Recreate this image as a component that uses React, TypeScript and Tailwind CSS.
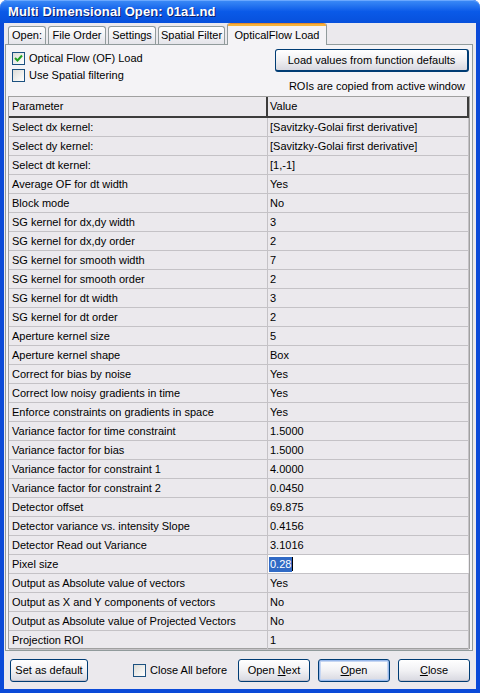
import React from "react";

const rows: [string, string][] = [
  ["Select dx kernel:", "[Savitzky-Golai first derivative]"],
  ["Select dy kernel:", "[Savitzky-Golai first derivative]"],
  ["Select dt kernel:", "[1,-1]"],
  ["Average OF for dt width", "Yes"],
  ["Block mode", "No"],
  ["SG kernel for dx,dy width", "3"],
  ["SG kernel for dx,dy order", "2"],
  ["SG kernel for smooth width", "7"],
  ["SG kernel for smooth order", "2"],
  ["SG kernel for dt width", "3"],
  ["SG kernel for dt order", "2"],
  ["Aperture kernel size", "5"],
  ["Aperture kernel shape", "Box"],
  ["Correct for bias by noise", "Yes"],
  ["Correct low noisy gradients in time", "Yes"],
  ["Enforce constraints on gradients in space", "Yes"],
  ["Variance factor for time constraint", "1.5000"],
  ["Variance factor for bias", "1.5000"],
  ["Variance factor for constraint 1", "4.0000"],
  ["Variance factor for constraint 2", "0.0450"],
  ["Detector offset", "69.875"],
  ["Detector variance vs. intensity Slope", "0.4156"],
  ["Detector Read out Variance", "3.1016"],
  ["Pixel size", "__EDIT__"],
  ["Output as Absolute value of vectors", "Yes"],
  ["Output as X and Y components of vectors", "No"],
  ["Output as Absolute value of Projected Vectors", "No"],
  ["Projection ROI", "1"],
];

function CheckBox({ checked }: { checked?: boolean }) {
  return (
    <div className="w-[13px] h-[13px] border border-[#1c5180] bg-gradient-to-br from-[#dcdcd7] to-[#ffffff] flex items-center justify-center shrink-0">
      {checked && (
        <svg width="9" height="9" viewBox="0 0 9 9">
          <path d="M1 4 L3.5 6.5 L8 1.5" stroke="#21a121" strokeWidth="2" fill="none" />
        </svg>
      )}
    </div>
  );
}

function Btn({ children, w, def }: { children: React.ReactNode; w: string; def?: boolean }) {
  return (
    <div
      className={`${w} h-[23px] rounded-[3px] border border-[#003c74] bg-gradient-to-b from-[#ffffff] via-[#f1f1f4] to-[#d8d8e0] flex items-center justify-center text-[11px] text-black ${
        def ? "shadow-[inset_0_0_0_1px_#98b8ea,inset_0_0_0_2px_#c6d6f2]" : "shadow-[inset_0_-1px_0_#c0c0cc]"
      }`}
    >
      {children}
    </div>
  );
}

function Tab({ label, w }: { label: string; w: string }) {
  return (
    <div
      className={`${w} h-[18px] mt-[3px] border border-b-0 border-[#919b9c] rounded-t-[3px] bg-gradient-to-b from-[#ffffff] to-[#e4e4ea] flex items-center justify-center text-[11px] text-black`}
    >
      {label}
    </div>
  );
}

export default function App() {
  return (
    <div className="w-[480px] h-[693px] bg-[#0b4ad8] rounded-t-[7px] flex flex-col font-['Liberation_Sans','DejaVu_Sans',sans-serif] select-none overflow-hidden">
      {/* Title bar */}
      <div className="h-[23px] shrink-0 rounded-t-[7px] bg-gradient-to-b from-[#3d8cf7] via-[#0a5ae8] to-[#0750dc] flex items-center pl-[8px] shadow-[inset_0_1px_0_#6aa8ff]">
        <span className="text-white font-bold text-[13px] tracking-[0.1px] [text-shadow:1px_1px_0_#0a1e6e]">
          Multi Dimensional Open: 01a1.nd
        </span>
      </div>
      {/* Body */}
      <div className="flex-1 mx-[4px] mb-[4px] bg-[#ebe9ed] flex flex-col">
        {/* Tabs */}
        <div className="h-[21px] shrink-0 flex items-end pl-[4px] gap-[2px] relative z-10">
          <Tab label="Open:" w="w-[38px]" />
          <Tab label="File Order" w="w-[58px]" />
          <Tab label="Settings" w="w-[48px]" />
          <Tab label="Spatial Filter" w="w-[67px]" />
          <div className="w-[100px] h-[22px] -mb-[1px] border border-b-0 border-[#919b9c] border-t-0 rounded-t-[3px] bg-[#f4f3f6] flex flex-col">
            <div className="h-[3px] rounded-t-[3px] bg-[#f5b33c] border-t border-[#e68b2c]" />
            <div className="flex-1 flex items-center justify-center text-[11px] text-black">OpticalFlow Load</div>
          </div>
        </div>
        {/* Panel */}
        <div className="h-[607px] shrink-0 ml-[1px] mr-[3px] border border-[#919b9c] bg-[#f4f3f6] flex flex-col px-[2px]">
          <div className="h-[51px] shrink-0 flex">
            <div className="flex flex-col pl-[4px] pt-[7px] gap-[4px]">
              <div className="flex items-center gap-[4px] h-[13px]">
                <CheckBox checked />
                <span className="text-[11px] text-black">Optical Flow (OF) Load</span>
              </div>
              <div className="flex items-center gap-[4px] h-[13px]">
                <CheckBox />
                <span className="text-[11px] text-black">Use Spatial filtering</span>
              </div>
            </div>
            <div className="flex-1 flex flex-col items-end pt-[4px] pr-[1px]">
              <div className="w-[194px] h-[23px] rounded-[3px] border border-[#003c74] border-r-2 border-b-2 bg-gradient-to-b from-[#ffffff] via-[#f0f0f3] to-[#d8d8e0] flex items-center justify-center text-[11px] text-black">
                Load values from function defaults
              </div>
              <div className="text-[11px] text-black mt-[8px] pr-[4px] leading-[13px]">ROIs are copied from active window</div>
            </div>
          </div>
          {/* Table */}
          <div className="w-[462px] h-[553px] border border-[#a0a0a0] bg-[#ebe9ed] flex flex-col">
            <div className="h-[21px] shrink-0 flex border-b-2 border-b-[#3c3c3c] bg-[#ebe9ed]">
              <div className="w-[259px] shrink-0 border-r-2 border-r-[#3c3c3c] pl-[3px] flex items-center text-[11px] text-black">
                Parameter
              </div>
              <div className="flex-1 border-r-2 border-r-[#3c3c3c] pl-[2px] flex items-center text-[11px] text-black">Value</div>
            </div>
            {rows.map(([p, v], i) => (
              <div key={i} className="h-[19px] shrink-0 flex border-b border-[#c4c2c6]">
                <div className="w-[259px] shrink-0 border-r border-[#c4c2c6] pl-[3px] flex items-center text-[11px] text-black">
                  {p}
                </div>
                {v === "__EDIT__" ? (
                  <div className="flex-1 mr-[1px] bg-white pl-[1px] flex items-center">
                    <span className="bg-[#316ac5] text-white text-[11px] px-[1px] leading-[15px]">0.28</span>
                    <span className="w-[1px] h-[14px] bg-black" />
                  </div>
                ) : (
                  <div className="flex-1 border-r border-[#c4c2c6] pl-[2px] flex items-center text-[11px] text-black">{v}</div>
                )}
              </div>
            ))}
          </div>
        </div>
        {/* Bottom buttons */}
        <div className="flex-1 flex items-center pl-[6px] pr-[6px]">
          <Btn w="w-[78px]">Set as default</Btn>
          <div className="flex items-center gap-[4px] ml-[45px]">
            <CheckBox />
            <span className="text-[11px] text-black">Close All before</span>
          </div>
          <div className="ml-auto flex gap-[8px]">
            <Btn w="w-[72px]">
              <span>
                Open <u>N</u>ext
              </span>
            </Btn>
            <Btn w="w-[72px]" def>
              <span>
                <u>O</u>pen
              </span>
            </Btn>
            <Btn w="w-[72px]">
              <span>
                <u>C</u>lose
              </span>
            </Btn>
          </div>
        </div>
      </div>
    </div>
  );
}
